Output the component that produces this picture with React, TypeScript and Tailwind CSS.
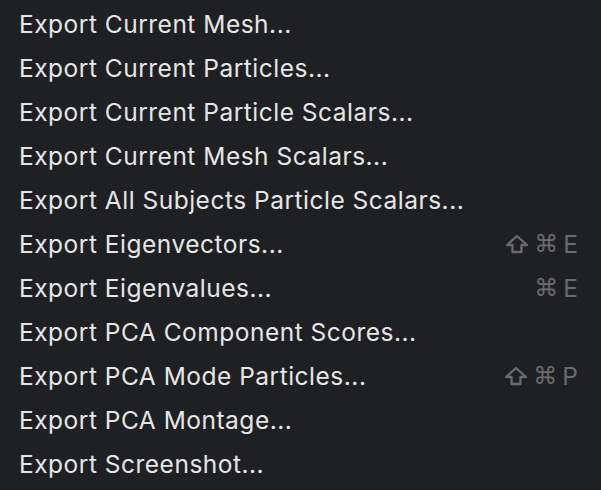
const items: { label: string; shift?: boolean; key?: string }[] = [
  { label: "Export Current Mesh..." },
  { label: "Export Current Particles..." },
  { label: "Export Current Particle Scalars..." },
  { label: "Export Current Mesh Scalars..." },
  { label: "Export All Subjects Particle Scalars..." },
  { label: "Export Eigenvectors...", shift: true, key: "E" },
  { label: "Export Eigenvalues...", key: "E" },
  { label: "Export PCA Component Scores..." },
  { label: "Export PCA Mode Particles...", shift: true, key: "P" },
  { label: "Export PCA Montage..." },
  { label: "Export Screenshot..." },
];

function ShiftIcon() {
  return (
    <svg width="24" height="20" viewBox="0 0 24 20" fill="none" stroke="currentColor" strokeWidth="2.3" strokeLinejoin="round">
      <path d="M12 2 L22 11 H16.5 V18 H7.5 V11 H2 Z" />
    </svg>
  );
}

export default function App() {
  return (
    <div className="h-[490px] w-[601px] bg-[#1f2023] pt-[2px] font-['Inter','Noto_Sans',sans-serif]">
      {items.map((it) => (
        <div key={it.label} className="flex h-[44px] items-center justify-between pl-[19px] pr-[23px]">
          <span className="text-[24.5px] tracking-[0.5px] text-[#e6e6e6]">{it.label}</span>
          {it.key && (
            <span className="flex items-center gap-[5px] text-[24.5px] text-[#6b6b6b]">
              {it.shift && <ShiftIcon />}
              <span className="font-['DejaVu_Sans'] text-[24px]">⌘</span>
              <span>{it.key}</span>
            </span>
          )}
        </div>
      ))}
    </div>
  );
}
